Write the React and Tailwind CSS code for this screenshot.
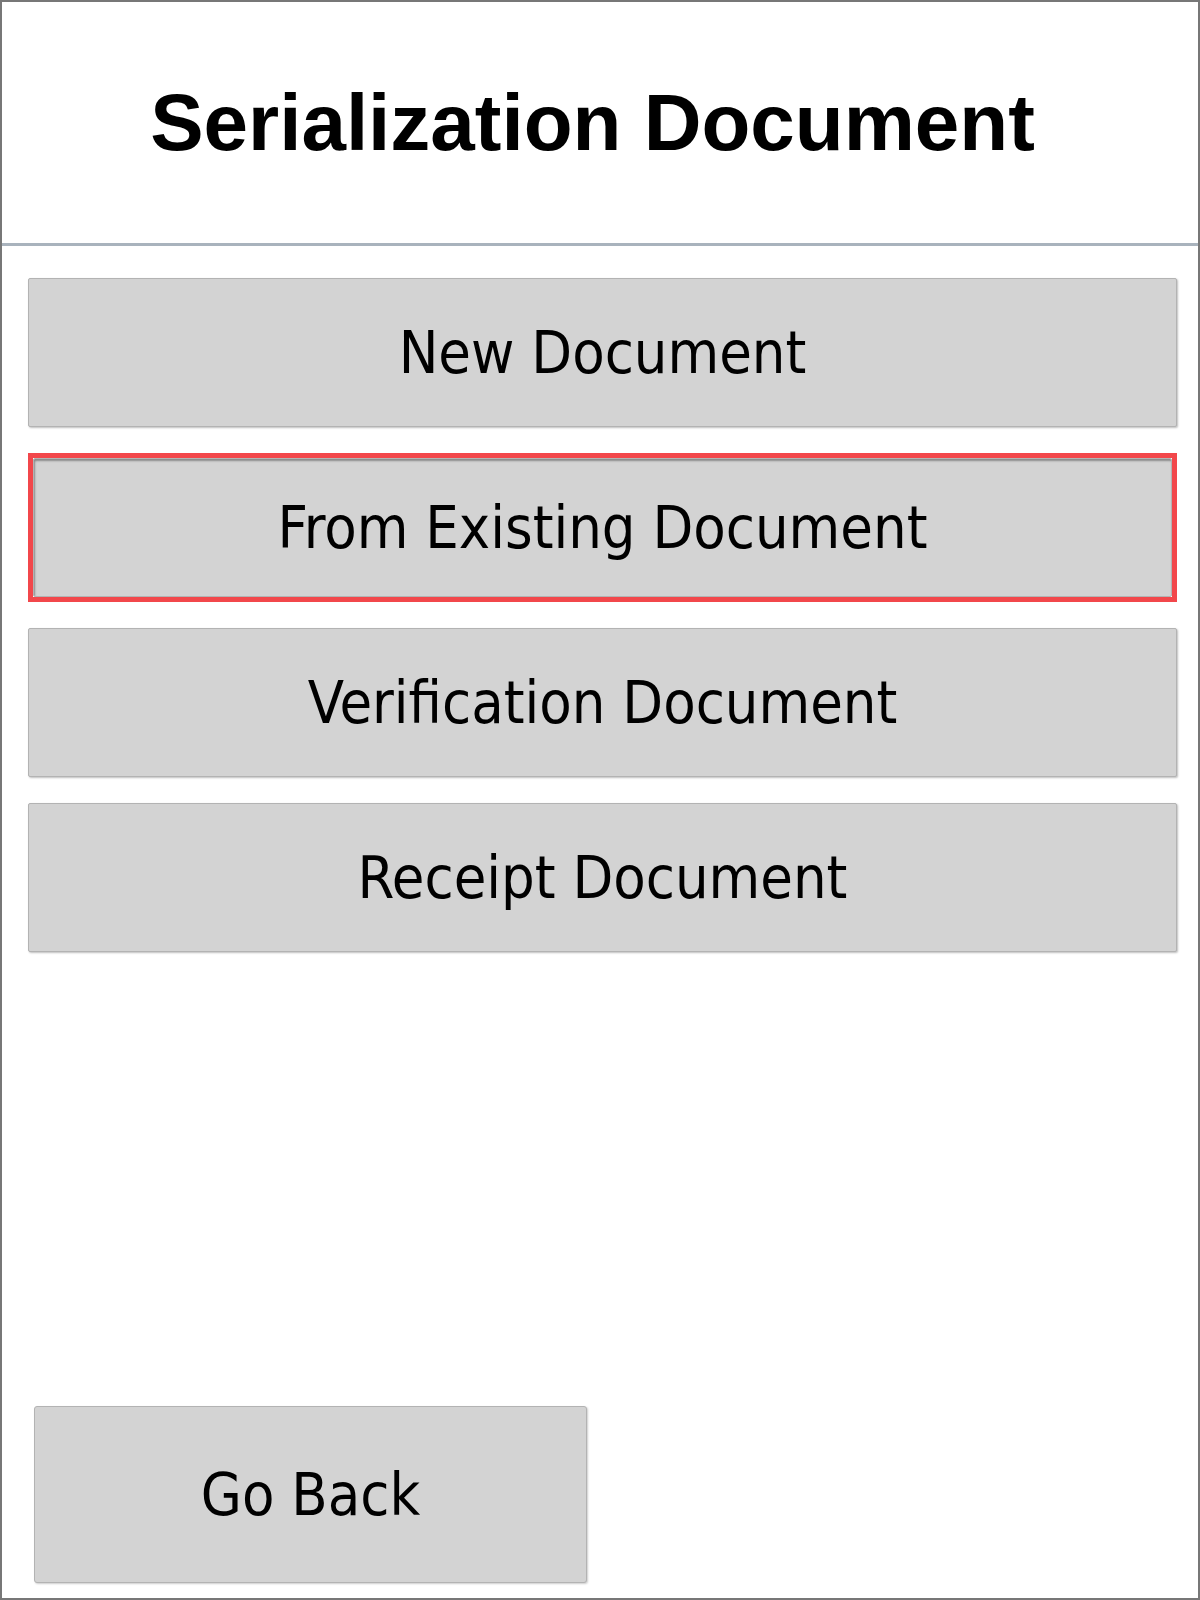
import React from "react";

const options = [
  { label: "New Document", active: false },
  { label: "From Existing Document", active: true },
  { label: "Verification Document", active: false },
  { label: "Receipt Document", active: false },
];

const btnFont = {
  fontFamily: '"DejaVu Sans Condensed", "DejaVu Sans", sans-serif',
};

const MenuButton = ({ label, active }) => (
  <div
    className={`w-full ${
      active ? "border-[5px] border-[#f2474b]" : "border-0"
    }`}
  >
    <button
      style={btnFont}
      className={`w-full flex items-center justify-center bg-[#d3d3d3] border border-[#b3b3b3] rounded-[2px] text-[59px] text-black leading-none ${
        active
          ? "h-[139px] shadow-[inset_1px_2px_2px_rgba(0,0,0,0.35)]"
          : "h-[149px] shadow-[1px_1px_2px_rgba(0,0,0,0.25)]"
      }`}
    >
      {label}
    </button>
  </div>
);

export default function App() {
  return (
    <div className="w-[1200px] h-[1600px] bg-white border-2 border-[#777777] flex flex-col">
      {/* Header */}
      <div className="h-[244px] flex items-center justify-center pr-[15px] border-b-[3px] border-[#a9b3bd]">
        <h1
          className="text-[80px] font-bold text-black leading-none"
          style={{ fontFamily: '"Liberation Sans", Arial, sans-serif' }}
        >
          Serialization Document
        </h1>
      </div>

      {/* Options */}
      <div className="flex-1 flex flex-col pt-[32px] pl-[26px] pr-[21px]">
        <div className="flex flex-col gap-[26px]">
          {options.map((o) => (
            <MenuButton key={o.label} label={o.label} active={o.active} />
          ))}
        </div>

        <div className="mt-auto pb-[15px] pl-[6px]">
          <button
            style={btnFont}
            className="w-[553px] h-[177px] flex items-center justify-center bg-[#d3d3d3] border border-[#b3b3b3] rounded-[3px] shadow-[1px_1px_2px_rgba(0,0,0,0.2)] text-[59px] text-black leading-none"
          >
            Go Back
          </button>
        </div>
      </div>
    </div>
  );
}
